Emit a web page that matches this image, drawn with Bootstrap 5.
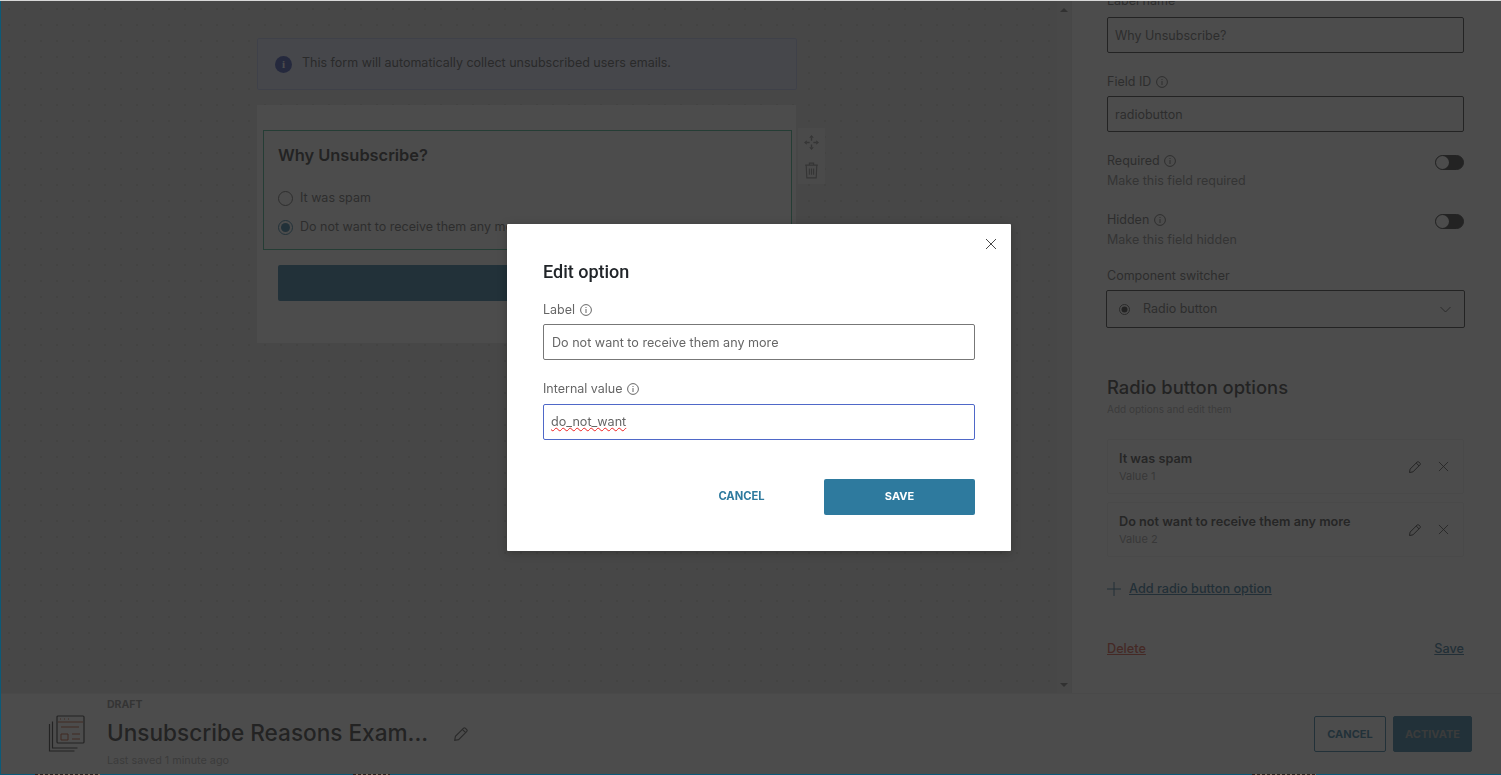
<!DOCTYPE html>
<html lang="en">
<head>
<meta charset="utf-8">
<title>Edit option</title>
<link href="https://cdn.jsdelivr.net/npm/bootstrap@5.3.0/dist/css/bootstrap.min.css" rel="stylesheet">
<style>
html,body{height:775px;overflow:hidden}
body{font-family:Inter,"Liberation Sans",sans-serif;background:#fff;color:#212529;font-size:12.5px}
.stage{height:775px;padding:0 0 1px 1px;background:#0b5a78;border-top:1px solid #d8d8d8;position:relative}
.shell{height:773px;background:#fff}
.work{height:692px}
.canvas-zone{width:1070px;flex:none;background-color:#e6e6e4;background-image:radial-gradient(#cfcfcd .7px,transparent .9px);background-size:16px 16px;padding-top:37px;padding-left:256px;position:relative}
.scroll-rail{width:14px;position:absolute;right:0;top:0;bottom:0;background:#ececec}
.arrow-up,.arrow-dn{position:absolute;left:3px;width:0;height:0;border-left:4px solid transparent;border-right:4px solid transparent}
.arrow-up{top:7px;border-bottom:4px solid #777}
.arrow-dn{bottom:6px;border-top:4px solid #777}
.side-zone{flex:1;background:#fff;border-left:1px solid #e3e3e3;padding:0 37px 0 35px;overflow:hidden}
.info-bar{width:540px;height:52px;background:#dfe6fb;border:1px solid #bcc8ef;border-radius:2px;padding-left:17px;color:#555;gap:10px}
.info-copy{margin-bottom:2px}
.info-dot{width:17px;height:17px;border-radius:50%;background:#3f51b5;color:#fff;font:700 11px/17px "Liberation Serif",serif;text-align:center}
.form-wrap{width:539px;height:238px;background:#fff;margin-top:15px;padding:25px 4px 0 6px;position:relative}
.field-box{height:120px;border:1px solid #3fb28a;padding:13px 15px 0 14px}
.field-title{font-size:16.4px;font-weight:600;line-height:22px;color:#333;margin-bottom:18px}
.radio-row{height:29px;color:#666;gap:7px}
.radio-ring{width:15px;height:15px;border:1px solid #666;border-radius:50%;background:#fff;position:relative;flex:none}
.radio-ring.on{border-color:#2e7a9e}
.radio-ring.on::after{content:"";position:absolute;inset:2px;border-radius:50%;background:#2e7a9e}
.form-submit{height:36px;background:#2e7a9e;margin:15px 5px 0 15px;border-radius:2px}
.tool-col{position:absolute;left:541px;top:23px;width:27px}
.tool-cell{height:28px;background:#f5f5f5}
.field-label{line-height:18px;color:#666;margin-bottom:5px}
.text-field{height:36px;border:1px solid #333;border-radius:2px;background:#fff;padding:0 7px;line-height:35px;color:#666}
.cut-label{margin-top:-9px;margin-bottom:7px}
.gap-id{margin-top:20px}
.gap-a{margin-top:20px}
.gap-h{margin-top:21.5px}
.gap-b{margin-top:18.5px}
.toggle-track{width:29px;height:15px;border-radius:8px;background:#333;border:1px solid #333;margin-top:3px;position:relative;flex:none}
.toggle-track::before{content:"";position:absolute;left:0;top:0;width:13px;height:13px;border-radius:50%;background:#fff}
.help-line{line-height:18px;color:#888;margin-top:1.5px}
.select-box{height:38px;border:1px solid #333;border-radius:2px;padding:0 13px 0 12px;width:359px;margin-left:-1px;color:#666}
.sel-dot{margin-right:13px}
.opts-title{font-size:18.4px;font-weight:500;line-height:24px;color:#333;margin-top:47px}
.opts-sub{font-size:10px;line-height:14px;color:#aaa;margin-top:3px;margin-bottom:23px}
.opt-card{height:55px;border:1px solid #eee;border-radius:2px;padding:0 14px 0 11px;margin-bottom:8px}
.opt-name{font-size:12.7px;font-weight:600;color:#444;line-height:18px}
.opt-val{font-size:11px;color:#999;line-height:16px}
.add-line{margin-top:22px;height:20px}
.link-add{color:#2e6f94;font-size:12.7px;font-weight:500;text-decoration:underline}
.link-del{color:#d9533f;font-size:12.7px;font-weight:500;text-decoration:underline}
.side-end{margin-top:40px}
.foot-bar{height:81px;background:#fff;padding:0 29px 0 47px;border-top:1px solid #eee;position:relative}
.doc-text{margin-left:21px;width:338px}
.draft-tag{font-size:10.5px;font-weight:700;color:#888;line-height:12px;margin-top:-2px}
.doc-name{font-size:22.6px;font-weight:500;color:#333;line-height:30px;margin-top:7px;white-space:nowrap}
.saved-line{font-size:10.8px;color:#aaa;line-height:14px;margin-top:6px}
.foot-btn{height:36px;font-size:11px;font-weight:700;border-radius:2px;padding:0;letter-spacing:0}
.foot-cancel{width:72px;color:#2e7a9e;border:1px solid #2e7a9e;background:#fff}
.foot-go{width:79px;background:#2e7a9e;color:#aaa;border:1px solid #2e7a9e;margin-left:7px}
.edge-bit{position:absolute;bottom:0;height:1px;z-index:30;background:repeating-linear-gradient(90deg,#222 0 3px,#7d7264 3px 5px)}
.bit-a{left:35px;width:65px}
.bit-b{left:353px;width:37px}
.bit-c{left:1252px;width:64px}
.veil{position:fixed;left:1px;top:1px;right:0;bottom:1px;background:rgba(31,31,31,.8);z-index:10}
.dialog{position:fixed;left:507px;top:224px;width:504px;height:327px;z-index:20;background:#fff;border-radius:1px;padding:36px 36px 0;box-shadow:0 2px 10px rgba(0,0,0,.25)}
.dialog-x{position:absolute;right:14px;top:14px;width:12px;height:12px;padding:0;border:0;background:none;line-height:0}
.dialog-title{font-family:Roboto,"Liberation Sans",sans-serif;font-size:18px;font-weight:500;line-height:24px;color:#212529;margin:0 0 17px}
.dlg-label{line-height:18px;color:#666;margin-bottom:5px}
.dlg-input{display:block;width:432px;height:36px;border:1px solid #777;border-radius:2px;padding:0 8px;font-family:Inter,"Liberation Sans",sans-serif;font-size:12.6px;color:#666;background:#fff;margin-bottom:20px}
.dlg-input.active-input{border-color:#4f68c8;margin-top:6px;margin-bottom:0;padding-left:7px;text-decoration:underline wavy #e22 1px;text-underline-offset:1px;line-height:34px}
.dlg-actions{margin-top:39px}
.dlg-cancel{width:113px;height:36px;border:0;background:none;color:#2e7a9e;font-size:11.2px;font-weight:700;padding:0 0 2px;margin-right:26px}
.dlg-save{width:151px;height:36px;border:0;border-radius:2px;background:#2e7a9e;color:#fff;font-size:11px;font-weight:700;padding:0 0 2px}
.tip-icon{display:inline-block;vertical-align:-2px;margin-left:1px}
</style>
</head>
<body>
<svg width="0" height="0" class="position-absolute">
<symbol id="tip" viewBox="0 0 12 12"><circle cx="6" cy="6" r="5.4" fill="none" stroke="currentColor"/><rect x="5.5" y="5" width="1" height="4" fill="currentColor"/><rect x="5.5" y="3" width="1" height="1" fill="currentColor"/></symbol>
<symbol id="pen" viewBox="0 0 14 14"><path d="M1.5 12.5l.6-3.4L9.3 1.900a1 1 0 0 1 1.400 0l1.400 1.400a1 1 0 0 1 0 1.400L4.900 11.900zM8.200 3l2.800 2.800" fill="none" stroke="currentColor"/></symbol>
<symbol id="cross" viewBox="0 0 12 12"><path d="M1 1l10 10M11 1L1 11" fill="none" stroke="currentColor" stroke-width=".9"/></symbol>
</svg>
<div class="stage">
<div class="shell d-flex flex-column">
<div class="work d-flex">
<div class="canvas-zone">
<div class="info-bar d-flex align-items-center"><span class="info-dot">i</span><span class="info-copy">This form will automatically collect unsubscribed users emails.</span></div>
<div class="form-wrap">
<div class="field-box">
<div class="field-title">Why Unsubscribe?</div>
<div class="radio-row d-flex align-items-center"><span class="radio-ring"></span><span>It was spam</span></div>
<div class="radio-row d-flex align-items-center"><span class="radio-ring on"></span><span>Do not want to receive them any more</span></div>
</div>
<div class="form-submit"></div>
<div class="tool-col">
<div class="tool-cell d-flex align-items-center justify-content-center"><svg width="15" height="15" viewBox="0 0 16 16" fill="none" stroke="#8a8a8a" stroke-width="1.500"><path d="M8 3v3M8 10v3M3 8h3M10 8h3"/><path d="M8 0l2.500 3h-5zM8 16l-2.500-3h5zM0 8l3-2.500v5zM16 8l-3 2.500v-5z" fill="#8a8a8a" stroke="none"/></svg></div>
<div class="tool-cell d-flex align-items-center justify-content-center"><svg width="15" height="17" viewBox="0 0 14 16" fill="none" stroke="#8a8a8a" stroke-width="1.100"><path d="M1 3h12M5 3V1h4v2M2 3l.6 12h8.800L12 3M5 6v6M7 6v6M9 6v6"/></svg></div>
</div>
</div>
<div class="scroll-rail"><span class="arrow-up"></span><span class="arrow-dn"></span></div>
</div>
<div class="side-zone">
<div class="field-label cut-label">Label name</div>
<div class="text-field">Why Unsubscribe?</div>
<div class="field-label gap-id">Field ID <svg class="tip-icon" width="12" height="12"><use href="#tip"/></svg></div>
<div class="text-field">radiobutton</div>
<div class="d-flex justify-content-between gap-a">
<div><div class="field-label mb-0">Required <svg class="tip-icon" width="12" height="12"><use href="#tip"/></svg></div><div class="help-line">Make this field required</div></div>
<span class="toggle-track"></span>
</div>
<div class="d-flex justify-content-between gap-h">
<div><div class="field-label mb-0">Hidden <svg class="tip-icon" width="12" height="12"><use href="#tip"/></svg></div><div class="help-line">Make this field hidden</div></div>
<span class="toggle-track"></span>
</div>
<div class="field-label gap-b">Component switcher</div>
<div class="select-box d-flex align-items-center">
<svg width="11" height="11" viewBox="0 0 11 11" class="sel-dot"><circle cx="5.500" cy="5.500" r="5" fill="none" stroke="#555"/><circle cx="5.500" cy="5.500" r="3" fill="#333"/></svg>
<span class="flex-grow-1">Radio button</span>
<svg width="11" height="7" viewBox="0 0 11 7" fill="none" stroke="#555"><path d="M.5 1l5 5 5-5"/></svg>
</div>
<div class="opts-title">Radio button options</div>
<div class="opts-sub">Add options and edit them</div>
<div class="opt-card d-flex align-items-center"><div class="flex-grow-1"><div class="opt-name">It was spam</div><div class="opt-val">Value 1</div></div><svg width="14" height="14" class="me-3" color="#333"><use href="#pen"/></svg><svg width="11" height="11" color="#333"><use href="#cross"/></svg></div>
<div class="opt-card d-flex align-items-center"><div class="flex-grow-1"><div class="opt-name">Do not want to receive them any more</div><div class="opt-val">Value 2</div></div><svg width="14" height="14" class="me-3" color="#333"><use href="#pen"/></svg><svg width="11" height="11" color="#333"><use href="#cross"/></svg></div>
<div class="add-line d-flex align-items-center gap-2"><svg width="14" height="14" viewBox="0 0 14 14" stroke="#2e6f94"><path d="M7 0v14M0 7h14"/></svg><a class="link-add" href="#">Add radio button option</a></div>
<div class="side-end d-flex justify-content-between"><a class="link-del" href="#">Delete</a><a class="link-add" href="#">Save</a></div>
</div>
</div>
<div class="foot-bar d-flex align-items-center">
<svg width="38" height="38" viewBox="0 0 38 38" fill="none" stroke="#333"><path d="M1.500 9v27h25M4.500 6.500v26.500h25" stroke-width="1.200"/><rect x="9" y="1" width="27" height="27" rx="1" stroke-width="1.200"/><path d="M10 7h25M13 12h18M13 19h7v6h-7zM24 19h8M24 24h8M12 4h1M16 4h1M20 4h1" stroke="#c2552c"/></svg>
<div class="doc-text">
<div class="draft-tag">DRAFT</div>
<div class="doc-name">Unsubscribe Reasons Exam...</div>
<div class="saved-line">Last saved 1 minute ago</div>
</div>
<svg width="16" height="16" viewBox="0 0 14 14" class="ms-2" color="#555"><use href="#pen"/></svg>
<div class="ms-auto d-flex">
<button class="btn foot-btn foot-cancel" type="button">CANCEL</button>
<button class="btn foot-btn foot-go" type="button">ACTIVATE</button>
</div>
</div>
</div>
<span class="edge-bit bit-a"></span><span class="edge-bit bit-b"></span><span class="edge-bit bit-c"></span>
</div>
<div class="veil"></div>
<div class="dialog">
<button class="dialog-x" type="button" aria-label="Close"><svg width="12" height="12" color="#333"><use href="#cross"/></svg></button>
<h5 class="dialog-title">Edit option</h5>
<div class="dlg-label">Label <svg class="tip-icon" width="12" height="12"><use href="#tip"/></svg></div>
<input class="dlg-input" type="text" value="Do not want to receive them any more" aria-label="Label">
<div class="dlg-label">Internal value <svg class="tip-icon" width="12" height="12"><use href="#tip"/></svg></div>
<div class="dlg-input active-input">do_not_want</div>
<div class="dlg-actions d-flex justify-content-end align-items-center">
<button class="dlg-cancel" type="button">CANCEL</button>
<button class="dlg-save" type="button">SAVE</button>
</div>
</div>
<script src="https://cdn.jsdelivr.net/npm/bootstrap@5.3.0/dist/js/bootstrap.bundle.min.js"></script>
</body>
</html>
